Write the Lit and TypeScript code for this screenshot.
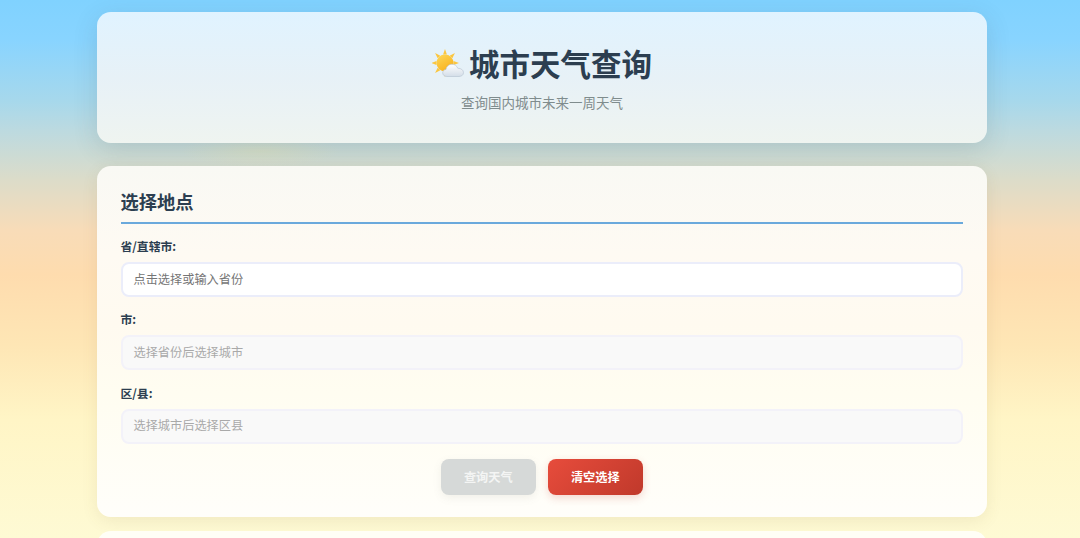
import { css, html, LitElement, svg } from "lit";
import { customElement } from "lit/decorators.js";

const RAY_ANGLES = [0, 45, 90, 135, 180, 225, 270, 315];

@customElement("app-root")
export class AppRoot extends LitElement {
  static styles = css`
    :host {
      display: block;
      height: 538px;
      overflow: hidden;
      font-family: "Noto Sans CJK SC", "Noto Sans", sans-serif;
      color: #2c3e50;
      background:
        radial-gradient(ellipse 80px 16px at 260px 151px, rgba(232, 226, 170, 0.32), transparent),
        linear-gradient(180deg, #80d2ff 0px, #88d4ff 40px, #a6d8ec 100px, #bcdae0 130px, #dcdcc9 180px, #f8dcb8 230px, #fedcae 275px, #fee6b5 345px, #fff5c6 420px, #fefad4 538px);
    }

    .container {
      width: 890px;
      margin-left: 97px;
      padding-top: 12px;
    }

    .header {
      height: 131px;
      box-sizing: border-box;
      border-radius: 14px;
      background: linear-gradient(180deg, #e0f3ff 0%, #e7f1f7 50%, #eff4f0 100%);
      box-shadow: 0 6px 24px rgba(60, 80, 90, 0.16);
      display: flex;
      flex-direction: column;
      align-items: center;
      padding-top: 29px;
    }

    .title {
      display: flex;
      align-items: center;
      gap: 5px;
      margin: 0;
      font-size: 30.5px;
      line-height: 44px;
      font-weight: 700;
    }

    .title svg {
      display: block;
      width: 32px;
      height: 32px;
    }

    .subtitle {
      margin: 6px 0 0;
      font-size: 13.5px;
      line-height: 22px;
      color: #7f8c8d;
    }

    .card {
      margin-top: 23px;
      height: 351px;
      box-sizing: border-box;
      padding: 23px 24px 0 23.5px;
      border-radius: 14px;
      background: linear-gradient(180deg, #f9f9f4 0%, #fefaf3 25%, #fffaf0 45%, #fffdf1 65%, #fffefa 100%);
      box-shadow: 0 4px 16px rgba(120, 100, 60, 0.1);
    }

    .card-title {
      margin: 0;
      padding-bottom: 9px;
      font-size: 18.3px;
      line-height: 24px;
      font-weight: 700;
      border-bottom: 2px solid #6aa9dc;
    }

    .field {
      margin-top: 14px;
    }

    .field + .field {
      margin-top: 14.4px;
    }

    label {
      display: block;
      font-size: 11.8px;
      line-height: 15px;
      font-weight: 700;
      margin-bottom: 9px;
    }

    .input {
      height: 35px;
      box-sizing: border-box;
      display: flex;
      align-items: center;
      padding: 0 11px 2px;
      font-size: 12.2px;
      border: 2px solid #ebedfa;
      border-radius: 8px;
      background: #fff;
      color: #757575;
    }

    .input.disabled {
      background: #f9f9f9;
      border-color: #f3f2f9;
      color: #a9a9a9;
    }

    .actions {
      display: flex;
      justify-content: center;
      gap: 12px;
      margin-top: 15.5px;
    }

    button {
      width: 95px;
      height: 36px;
      border: none;
      border-radius: 8px;
      font-family: inherit;
      font-size: 12.2px;
      font-weight: 700;
      color: #fff;
    }

    .query {
      background: #d6d9d8;
      color: #f4f5f4;
      box-shadow: 0 3px 8px rgba(120, 120, 110, 0.1);
    }

    .clear {
      background: linear-gradient(135deg, #e74c3c, #c0392b);
      box-shadow: 0 3px 8px rgba(192, 57, 43, 0.2);
    }

    .next {
      margin-top: 14px;
      height: 40px;
      border-radius: 14px 14px 0 0;
      background: #fffef6;
    }
  `;

  // sun behind cloud, stands in for the weather emoji
  private renderEmoji() {
    return html`
      <svg viewBox="0 -1 32 32" aria-hidden="true">
        <defs>
          <linearGradient id="sun" x1="0" y1="0" x2="0.6" y2="1">
            <stop offset="0" stop-color="#fdd85a" />
            <stop offset="1" stop-color="#f9b21d" />
          </linearGradient>
          <linearGradient id="cloud" x1="0" y1="0" x2="0" y2="1">
            <stop offset="0" stop-color="#ffffff" />
            <stop offset="1" stop-color="#d3dde8" />
          </linearGradient>
        </defs>
        <g fill="#fbc63f">
          ${RAY_ANGLES.map(
            (a) => svg`<path d="M13 1l1.900 5.500h-3.800z" transform="rotate(${a} 13 15)" />`,
          )}
        </g>
        <circle cx="13" cy="15" r="8.500" fill="url(#sun)" />
        <path
          d="M15 28.500c-2.600 0-4.300-1.600-4.300-3.600 0-1.900 1.400-3.300 3.300-3.500.4-3 2.900-5.200 6-5.200 2.700 0 5 1.700 5.800 4.100 3.200-.2 5.700 1.800 5.700 4.300 0 2.300-1.900 3.900-4.500 3.900z"
          fill="url(#cloud)"
          stroke="#b4c1ce"
          stroke-width="0.600"
        />
      </svg>
    `;
  }

  render() {
    return html`
      <div class="container">
        <header class="header">
          <h1 class="title">${this.renderEmoji()}<span>城市天气查询</span></h1>
          <p class="subtitle">查询国内城市未来一周天气</p>
        </header>
        <section class="card">
          <h2 class="card-title">选择地点</h2>
          <div class="field">
            <label>省/直辖市:</label>
            <div class="input">点击选择或输入省份</div>
          </div>
          <div class="field">
            <label>市:</label>
            <div class="input disabled">选择省份后选择城市</div>
          </div>
          <div class="field">
            <label>区/县:</label>
            <div class="input disabled">选择城市后选择区县</div>
          </div>
          <div class="actions">
            <button class="query">查询天气</button>
            <button class="clear">清空选择</button>
          </div>
        </section>
        <div class="next"></div>
      </div>
    `;
  }
}
